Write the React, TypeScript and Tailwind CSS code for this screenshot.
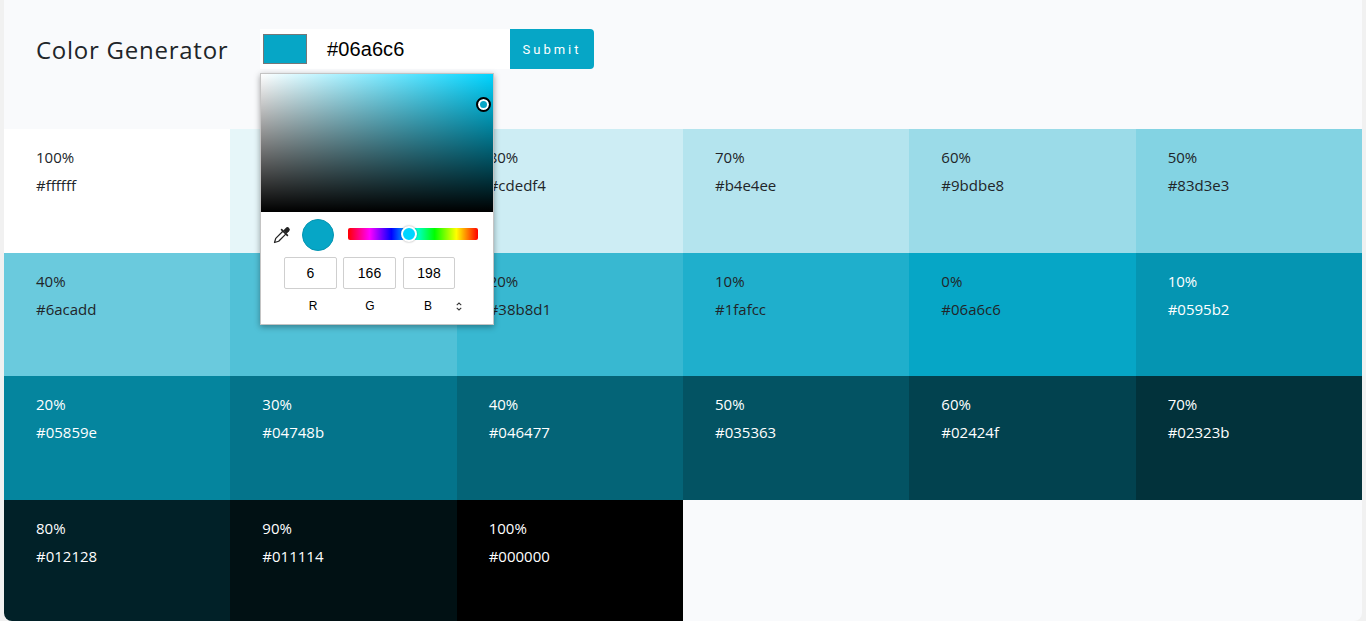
const shades = [
  { label: "100%", hex: "#ffffff", bg: "bg-[#ffffff]", text: "text-[#212529]" },
  { label: "90%", hex: "#e6f6f9", bg: "bg-[#e6f6f9]", text: "text-[#212529]" },
  { label: "80%", hex: "#cdedf4", bg: "bg-[#cdedf4]", text: "text-[#212529]" },
  { label: "70%", hex: "#b4e4ee", bg: "bg-[#b4e4ee]", text: "text-[#212529]" },
  { label: "60%", hex: "#9bdbe8", bg: "bg-[#9bdbe8]", text: "text-[#212529]" },
  { label: "50%", hex: "#83d3e3", bg: "bg-[#83d3e3]", text: "text-[#212529]" },
  { label: "40%", hex: "#6acadd", bg: "bg-[#6acadd]", text: "text-[#212529]" },
  { label: "30%", hex: "#51c1d7", bg: "bg-[#51c1d7]", text: "text-[#212529]" },
  { label: "20%", hex: "#38b8d1", bg: "bg-[#38b8d1]", text: "text-[#212529]" },
  { label: "10%", hex: "#1fafcc", bg: "bg-[#1fafcc]", text: "text-[#212529]" },
  { label: "0%", hex: "#06a6c6", bg: "bg-[#06a6c6]", text: "text-[#212529]" },
  { label: "10%", hex: "#0595b2", bg: "bg-[#0595b2]", text: "text-white" },
  { label: "20%", hex: "#05859e", bg: "bg-[#05859e]", text: "text-white" },
  { label: "30%", hex: "#04748b", bg: "bg-[#04748b]", text: "text-white" },
  { label: "40%", hex: "#046477", bg: "bg-[#046477]", text: "text-white" },
  { label: "50%", hex: "#035363", bg: "bg-[#035363]", text: "text-white" },
  { label: "60%", hex: "#02424f", bg: "bg-[#02424f]", text: "text-white" },
  { label: "70%", hex: "#02323b", bg: "bg-[#02323b]", text: "text-white" },
  { label: "80%", hex: "#012128", bg: "bg-[#012128]", text: "text-white" },
  { label: "90%", hex: "#011114", bg: "bg-[#011114]", text: "text-white" },
  { label: "100%", hex: "#000000", bg: "bg-[#000000]", text: "text-white" },
];

function ColorPopup() {
  return (
    <div className="absolute left-0 top-[44px] z-10 w-[234px] h-[252px] bg-white border border-[#c4c4c4] shadow-[0_2px_6px_rgba(0,0,0,0.35)] font-['Liberation_Sans',sans-serif] text-black">
      <div className="relative h-[138px] bg-[linear-gradient(to_bottom,transparent,#000),linear-gradient(to_right,#fff,#00d4ff)]">
        <div className="absolute left-[215px] top-[23px] w-[15px] h-[15px] rounded-full border-2 border-black bg-[#06a6c6] shadow-[inset_0_0_0_2px_#fff]" />
      </div>
      <div className="flex items-center h-[46px] pl-[11px]">
        <svg viewBox="0 0 24 24" className="w-[20px] h-[20px]">
          <path d="M13 7.5 4.5 16 3 21l5-1.5 8.5-8.5" fill="#fff" stroke="#222" strokeWidth="1.5" strokeLinejoin="round" />
          <path d="M13.5 6.5l3-3a2.8 2.8 0 0 1 4 4l-3 3z" fill="#222" />
          <path d="M11.5 5.5l7 7" stroke="#222" strokeWidth="2" strokeLinecap="round" />
        </svg>
        <div className="ml-[10px] w-[32px] h-[32px] rounded-full bg-[#06a6c6] border border-[#0595b2]" />
        <div className="relative ml-[14px] -mt-[2px] w-[130px] h-[12px] rounded-[2px] bg-[linear-gradient(to_right,#f00,#f0f,#00f,#0ff,#0f0,#ff0,#f00)]">
          <div className="absolute left-[53px] top-[-2px] w-[16px] h-[16px] rounded-full bg-[#00d4ff] border-2 border-white shadow-[0_0_2px_rgba(0,0,0,0.4)]" />
        </div>
      </div>
      <div className="flex -mt-[1px] pl-[23px] text-[14px]">
        <div className="w-[53px] h-[32px] flex items-center justify-center border border-[#cfcfcf] rounded-[2px]">6</div>
        <div className="ml-[6px] w-[53px] h-[32px] flex items-center justify-center border border-[#cfcfcf] rounded-[2px]">166</div>
        <div className="ml-[7px] w-[52px] h-[32px] flex items-center justify-center border border-[#cfcfcf] rounded-[2px]">198</div>
      </div>
      <div className="flex items-center pl-[23px] mt-[9px] text-[12px] leading-[16px]">
        <span className="w-[58px] text-center">R</span>
        <span className="w-[56px] text-center">G</span>
        <span className="w-[60px] text-center">B</span>
        <svg viewBox="0 0 8 12" className="w-[6px] h-[9px] ml-[-2px] stroke-[#333] fill-none" strokeWidth="1.4">
          <path d="M1 4.2 4 1.4 7 4.2M1 7.8 4 10.6 7 7.8" />
        </svg>
      </div>
    </div>
  );
}

export default function App() {
  return (
    <div className="h-[621px] overflow-hidden bg-[#f1f1f1] px-[4px] font-['Open_Sans','Noto_Sans',sans-serif]">
      <div className="h-full overflow-hidden rounded-b-lg bg-[#f9fafc]">
        <header className="flex items-start h-[129px] pl-[32px] pt-[29px]">
          <h1 className="w-[224px] h-[40px] pt-[2px] flex items-center text-[24px] tracking-[0.75px] text-[#212529]">Color Generator</h1>
          <div className="relative flex">
            <div className="flex items-center w-[250px] h-[40px] bg-white pl-[3px]">
              <div className="w-[44px] h-[30px] bg-[#06a6c6] border border-[#777]" />
              <span className="ml-[20px] font-['Liberation_Sans',sans-serif] text-[20px] tracking-[0.1px] text-black">#06a6c6</span>
            </div>
            <button className="w-[84px] h-[40px] pt-[1px] bg-[#06a6c6] rounded-r-[4px] font-['Roboto',sans-serif] text-[13px] tracking-[3px] text-white">
              Submit
            </button>
            <ColorPopup />
          </div>
        </header>
        <div className="grid grid-cols-6 auto-rows-[123.6px]">
          {shades.map((s, i) => (
            <div key={i} className={`${s.bg} ${s.text} pl-[32px] pt-[14px] text-[15px] leading-[28px]`}>
              <p>{s.label}</p>
              <p>{s.hex}</p>
            </div>
          ))}
        </div>
      </div>
    </div>
  );
}
